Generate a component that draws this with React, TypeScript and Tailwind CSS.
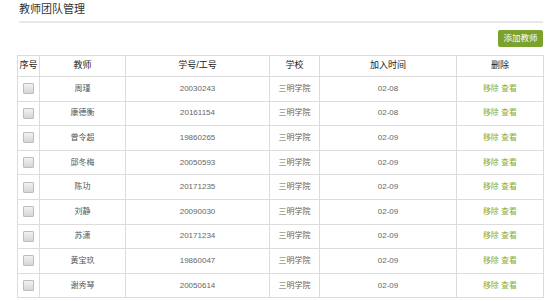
import React from 'react';

interface Teacher {
  name: string;
  id: string;
  school: string;
  date: string;
}

const teachers: Teacher[] = [
  { name: '周瑾', id: '20030243', school: '三明学院', date: '02-08' },
  { name: '康德衡', id: '20161154', school: '三明学院', date: '02-08' },
  { name: '曾令超', id: '19860265', school: '三明学院', date: '02-09' },
  { name: '邱冬梅', id: '20050593', school: '三明学院', date: '02-09' },
  { name: '陈功', id: '20171235', school: '三明学院', date: '02-09' },
  { name: '刘静', id: '20090030', school: '三明学院', date: '02-09' },
  { name: '苏潇', id: '20171234', school: '三明学院', date: '02-09' },
  { name: '黄宝玖', id: '19860047', school: '三明学院', date: '02-09' },
  { name: '谢秀琴', id: '20050614', school: '三明学院', date: '02-09' },
];

const font = { fontFamily: '"Liberation Sans", "Noto Sans CJK SC", sans-serif' };

export default function App() {
  return (
    <div
      className="w-[552px] h-[301px] overflow-hidden bg-white pl-[17px] pr-[9px]"
      style={font}
    >
      <div className="pl-[2px] pt-[2px] text-[11px] leading-[15px] text-[#333]">教师团队管理</div>
      <div className="ml-[2px] mt-[4px] h-[2px] bg-[#e8e8e8]" />

      <div className="flex justify-end mt-[7px]">
        <button className="h-[17px] w-[45px] rounded-[2px] bg-[#7aa22d] text-[8.5px] leading-[17px] text-white">
          添加教师
        </button>
      </div>

      <table className="mt-[8px] w-[526px] table-fixed border-collapse border border-[#dcdcdc] text-center">
        <colgroup>
          <col className="w-[22px]" />
          <col className="w-[86px]" />
          <col className="w-[144px]" />
          <col className="w-[50px]" />
          <col className="w-[137px]" />
          <col className="w-[87px]" />
        </colgroup>
        <thead>
          <tr className="h-[21px] text-[9px] text-[#222]">
            <th className="border border-[#dcdcdc] p-0 font-normal">序号</th>
            <th className="border border-[#dcdcdc] p-0 font-normal">教师</th>
            <th className="border border-[#dcdcdc] p-0 font-normal">学号/工号</th>
            <th className="border border-[#dcdcdc] p-0 font-normal">学校</th>
            <th className="border border-[#dcdcdc] p-0 font-normal">加入时间</th>
            <th className="border border-[#dcdcdc] p-0 font-normal">删除</th>
          </tr>
        </thead>
        <tbody>
          {teachers.map((t) => (
            <tr key={t.id} className="h-[24.6px] text-[8px] text-[#666]">
              <td className="border border-[#dcdcdc] p-0">
                <div className="mx-auto h-[11px] w-[11px] rounded-[1px] border border-[#bdbdbd] bg-gradient-to-b from-[#f2f2f2] to-[#d6d6d6]" />
              </td>
              <td className="border border-[#dcdcdc] p-0 text-[#555]">{t.name}</td>
              <td className="border border-[#dcdcdc] p-0">{t.id}</td>
              <td className="border border-[#dcdcdc] p-0">{t.school}</td>
              <td className="border border-[#dcdcdc] p-0">{t.date}</td>
              <td className="border border-[#dcdcdc] p-0 text-[#88ad3a]">
                <span>移除</span> <span>查看</span>
              </td>
            </tr>
          ))}
        </tbody>
      </table>
    </div>
  );
}
